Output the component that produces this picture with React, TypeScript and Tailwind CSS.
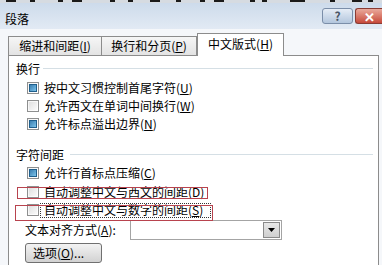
import React from 'react'

const font = "font-['Noto_Sans_CJK_SC','Noto_Sans',sans-serif]"

function Key({ k }: { k: string }) {
  return (
    <span>
      (<span className="underline underline-offset-1">{k}</span>)
    </span>
  )
}

function Check({ checked }: { checked: boolean }) {
  return (
    <span className="w-[12px] h-[12px] border border-[#8e8f8f] bg-gradient-to-br from-[#f4f4f4] to-[#ffffff] flex items-center justify-center shrink-0">
      {checked ? (
        <span className="w-[8px] h-[8px] border border-[#1f5f8c] bg-gradient-to-br from-[#3b7fb0] to-[#7cc3ea]" />
      ) : (
        <span className="w-[8px] h-[8px] bg-gradient-to-br from-[#e0e0e0] to-[#fafafa]" />
      )}
    </span>
  )
}

function Row({ checked, label, k, h }: { checked: boolean; label: string; k: string; h: string }) {
  return (
    <div className={`flex items-center gap-[5px] pl-[18px] ${h}`}>
      <Check checked={checked} />
      <span className="text-[12px] leading-[14px] text-black">
        {label}
        <Key k={k} />
      </span>
    </div>
  )
}

function Section({ title, line }: { title: string; line: string }) {
  return (
    <div className="flex items-center h-[16px] pl-[7px] pr-[5px]">
      <span className="text-[12px] leading-[14px] text-black">{title}</span>
      <span className={`flex-1 h-[2px] border-t border-[#d5dfe5] border-b-white ${line}`} />
    </div>
  )
}

export default function App() {
  return (
    <div className={`w-[382px] h-[265px] overflow-hidden bg-[#f5f7fa] flex flex-col ${font}`}>
      {/* bit of the window behind */}
      <svg width="382" height="3" className="block shrink-0">
        <rect x="0" y="0" width="382" height="3" fill="#d6dbe1" />
        {[6, 30, 58, 72, 110, 128, 150, 176, 200, 214, 250, 262, 290, 300, 330, 352, 368].map((x, i) => (
          <rect key={x} x={x} y="0" width={i % 3 === 0 ? 10 : 5} height="2" fill="#1a1a1a" />
        ))}
      </svg>

      {/* title bar */}
      <div className="h-[26px] shrink-0 flex items-start bg-gradient-to-b from-[#cddbeb] to-[#e2eaf4] pl-[5px]">
        <span className="text-[12px] leading-[14px] text-black mt-[9px]">段落</span>
        <div className="flex-1" />
        <div className="mt-[5px] w-[31px] h-[16px] rounded-[3px] border border-[#7b8ea9] bg-gradient-to-b from-[#e6edf6] to-[#b3c6dd] flex items-center justify-center text-[12px] leading-none text-[#4a5566] font-bold">
          ?
        </div>
        <div className="mt-[5px] ml-[2px] w-[27px] h-[16px] rounded-l-[3px] border border-r-0 border-[#8a3b33] bg-gradient-to-b from-[#e9a99c] to-[#c5473a] flex items-center justify-center text-[13px] leading-none text-white font-bold">
          ✕
        </div>
      </div>

      {/* tabs */}
      <div className="h-[26px] shrink-0 flex items-end pl-[8px] relative z-10">
        <div className="h-[19px] w-[94px] border border-b-0 border-[#8c8c8c] bg-gradient-to-b from-[#f6f6f6] to-[#e3e3e3] flex items-center justify-center text-[12px] leading-[14px] text-black">
          <span>缩进和间距<Key k="I" /></span>
        </div>
        <div className="h-[19px] w-[95px] border border-b-0 border-l-0 border-[#8c8c8c] bg-gradient-to-b from-[#f6f6f6] to-[#e3e3e3] flex items-center justify-center text-[12px] leading-[14px] text-black">
          <span>换行和分页<Key k="P" /></span>
        </div>
        <div className="h-[23px] w-[87px] border border-b-0 border-[#8c8c8c] bg-white flex items-start justify-center pt-[3px] text-[12px] leading-[14px] text-black -mb-px">
          <span>中文版式<Key k="H" /></span>
        </div>
      </div>

      {/* panel */}
      <div className="flex-1 ml-[8px] mr-[3px] border border-b-0 border-[#8c8c8c] bg-white flex flex-col pt-[5px]">
        <Section title="换行" line="ml-[3px]" />
        <div className="h-[2px]" />
        <Row checked label="按中文习惯控制首尾字符" k="U" h="h-[18px]" />
        <Row checked={false} label="允许西文在单词中间换行" k="W" h="h-[18px]" />
        <Row checked label="允许标点溢出边界" k="N" h="h-[18px]" />

        <div className="h-[14px]" />
        <Section title="字符间距" line="ml-[6px]" />
        <div className="h-[1px]" />
        <Row checked label="允许行首标点压缩" k="C" h="h-[18px]" />
        <div className="relative">
          <Row checked={false} label="自动调整中文与西文的间距" k="D" h="h-[19px]" />
          <span className="absolute left-[8px] top-[5px] w-[191px] h-[12px] border border-[#b8434e]" />
        </div>
        <div className="relative">
          <Row checked={false} label="自动调整中文与数字的间距" k="S" h="h-[18px]" />
          <span className="absolute left-[31px] top-[2px] w-[171px] h-[15px] border border-dotted border-[#333]" />
          <span className="absolute left-[6px] top-[4px] w-[198px] h-[16px] border border-[#b8434e]" />
        </div>

        <div className="h-[1px]" />
        <div className="flex items-center h-[20px] pl-[16px]">
          <span className="w-[105px] text-[12px] leading-[14px] text-black">
            文本对齐方式<Key k="A" />:
          </span>
          <div className="w-[152px] h-[20px] border border-[#a4a4a4] bg-white flex justify-end p-px">
            <div className="w-[17px] h-full border border-[#8a8a8a] bg-gradient-to-b from-[#e8e8e8] to-[#cfcfcf] flex items-center justify-center">
              <svg width="7" height="4" viewBox="0 0 7 4">
                <path d="M0 0 H7 L3.5 4 Z" fill="#000" />
              </svg>
            </div>
          </div>
        </div>

        <div className="h-[3px]" />
        <div className="pl-[16px]">
          <div className="w-[77px] h-[20px] rounded-[3px] border border-[#707070] bg-gradient-to-b from-[#f3f3f3] to-[#d2d2d2] flex items-center pl-[7px] text-[12px] leading-[14px] text-black">
            选项<Key k="O" />...
          </div>
        </div>
      </div>
    </div>
  )
}
